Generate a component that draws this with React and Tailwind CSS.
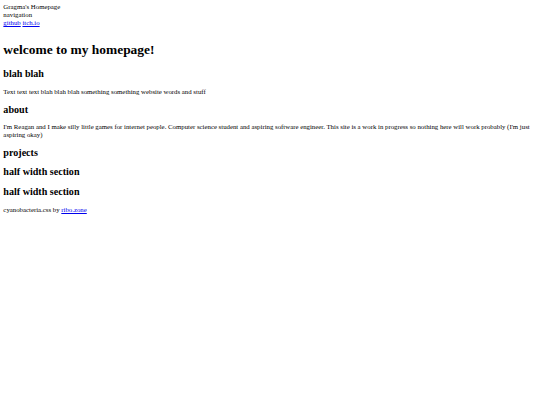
export default function App() {
  return (
    <div className="min-h-[405px] bg-white text-black font-['Liberation_Serif','Times_New_Roman',serif] text-[6.8px] leading-[1.15] p-[3.36px]">
      <header>
        <div>Gragma's Homepage</div>
        <nav>
          <div>navigation</div>
          <div>
            <a href="#" className="text-[#0000ee] underline">github</a>{" "}
            <a href="#" className="text-[#0000ee] underline">itch.io</a>
          </div>
        </nav>
      </header>
      <main className="pt-[6px]">
        <h1 className="text-[13.44px] font-bold mt-[9px] mb-[11px]">welcome to my homepage!</h1>
        <section>
          <h2 className="text-[10.08px] font-bold my-[8px]">blah blah</h2>
          <p className="my-[6.72px]">Text text text blah blah blah something something website words and stuff</p>
        </section>
        <section>
          <h2 className="text-[10.08px] font-bold my-[8px]">about</h2>
          <p className="my-[6.72px]">I'm Reagan and I make silly little games for internet people. Computer science student and aspiring software engineer. This site is a work in progress so nothing here will work probably (I'm just aspiring okay)</p>
        </section>
        <section>
          <h2 className="text-[10.08px] font-bold my-[8px]">projects</h2>
          <h2 className="text-[10.08px] font-bold my-[8px]">half width section</h2>
          <h2 className="text-[10.08px] font-bold my-[8px]">half width section</h2>
        </section>
      </main>
      <footer>
        <p className="my-[6.72px]">cyanobacteria.css by <a href="#" className="text-[#0000ee] underline">ribo.zone</a></p>
      </footer>
    </div>
  );
}
